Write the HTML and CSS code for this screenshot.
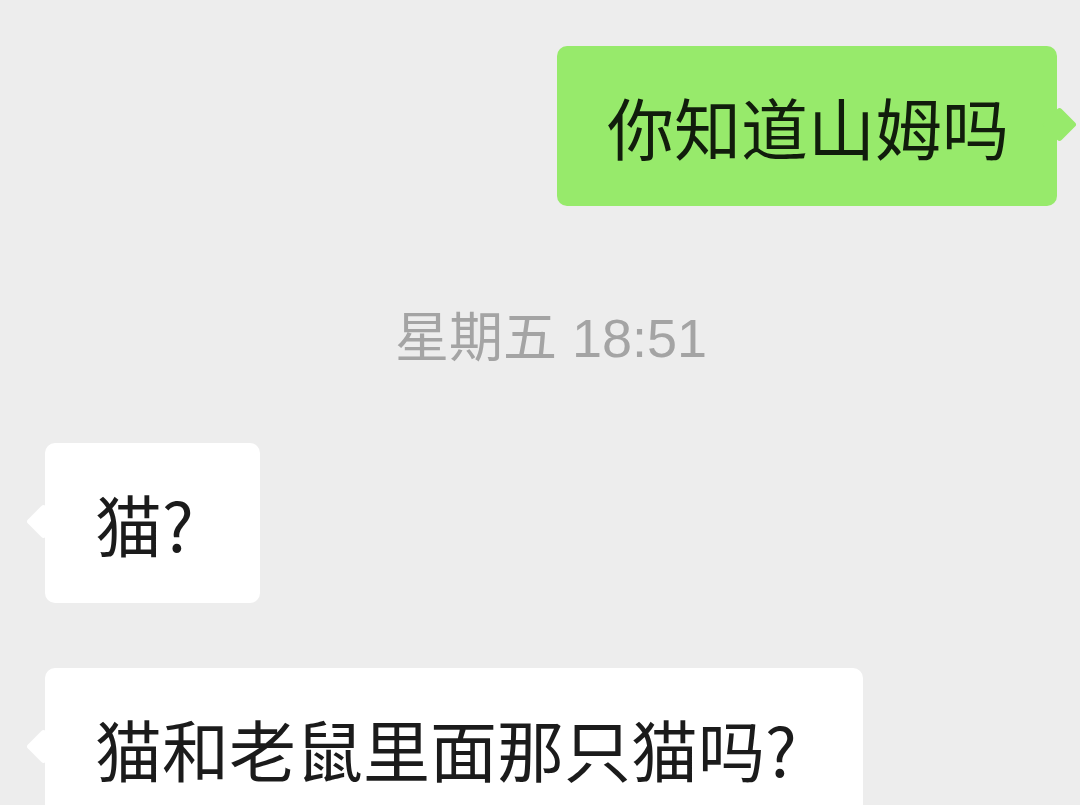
FILE: index.html
```html
<!DOCTYPE html>
<html lang="zh-CN">
<head>
  <meta charset="UTF-8">
  <title>聊天记录</title>
  <link rel="stylesheet" href="styles.css">
</head>
<body>
  <div class="chat">
    <div class="row mine">
      <div class="bubble green">你知道山姆吗</div>
    </div>

    <div class="time">星期五 18:51</div>

    <div class="row theirs first">
      <div class="bubble white">猫?</div>
    </div>

    <div class="row theirs">
      <div class="bubble white">猫和老鼠里面那只猫吗?</div>
    </div>
  </div>
</body>
</html>
```

FILE: styles.css
```css
body {
  margin: 0;
  background: #ededed;
  font-family: "Noto Sans CJK SC", "Noto Sans", sans-serif;
  overflow: hidden;
}
.chat {
  padding: 46px 23px 0 45px;
  display: flex;
  flex-direction: column;
}
.row {
  display: flex;
}
.row.mine {
  justify-content: flex-end;
}
.row.theirs {
  justify-content: flex-start;
  margin-top: 65px;
}
.row.theirs.first {
  margin-top: 75px;
}
.bubble {
  position: relative;
  padding: 34px 48px 34px 50px;
  font-size: 67px;
  line-height: 92px;
  border-radius: 10px;
  white-space: nowrap;
}
/* tail of the bubble */
.bubble::after {
  content: "";
  position: absolute;
  top: 66px;
  width: 25px;
  height: 25px;
  border-radius: 3px;
  transform: rotate(45deg);
}
.green {
  background: #97ea6b;
  color: #111d0c;
}
.green::after {
  right: -15px;
  background: #97ea6b;
}
.white {
  padding-left: 50px;
  padding-right: 66px;
  background: #ffffff;
  color: #1b1b1b;
}
.white::after {
  left: -14px;
  background: #ffffff;
}
.time {
  margin-top: 102px;
  text-align: center;
  font-family: "Liberation Sans", "Noto Sans CJK SC", sans-serif;
  font-size: 54px;
  line-height: 60px;
  color: #a4a4a4;
}
```
